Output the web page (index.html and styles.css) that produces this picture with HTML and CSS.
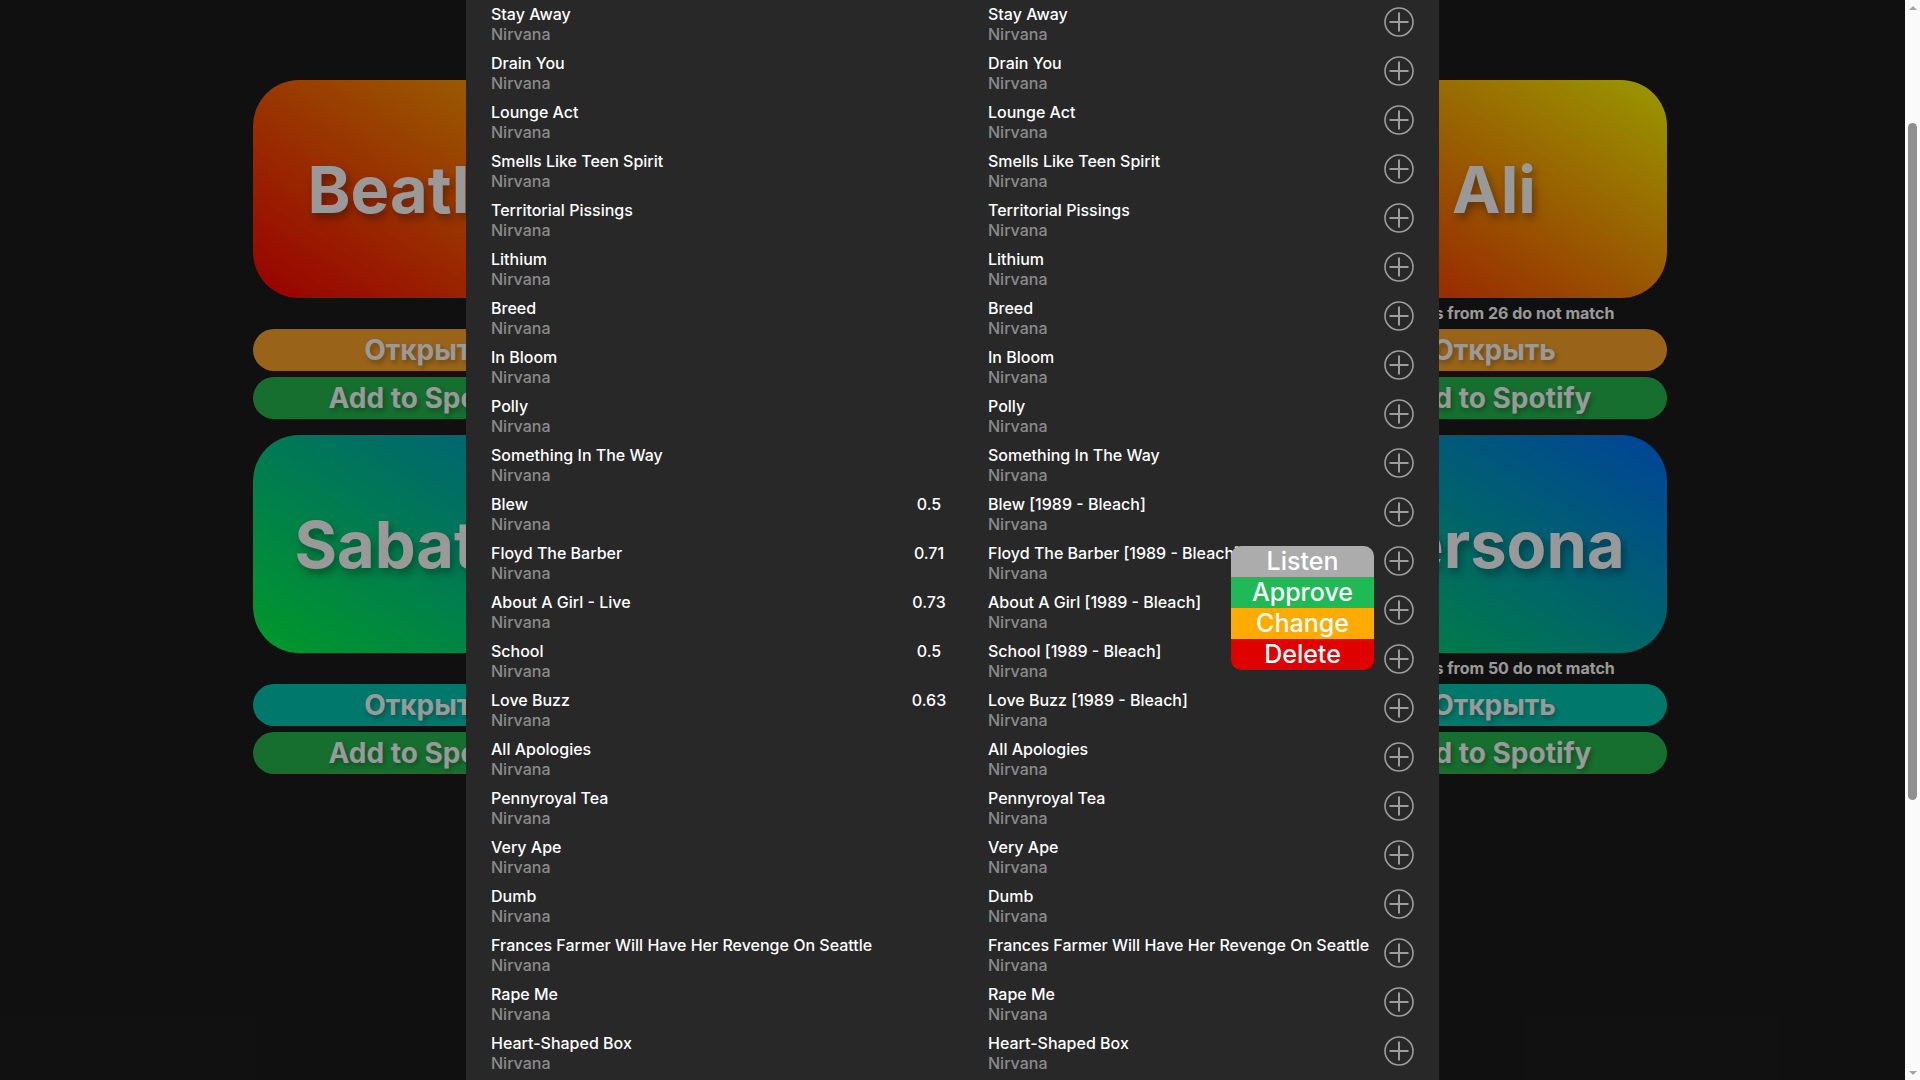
FILE: index.html
```html
<!DOCTYPE html>
<html lang="en">
<head>
<meta charset="utf-8">
<title>Playlists</title>
<link rel="stylesheet" href="styles.css">
</head>
<body>
<div class="viewport">
  <main class="main">
    <section class="board">
      <div class="item">
        <div class="card g-beatles"><span>Beatles</span></div>
        <div class="info"></div>
        <div class="btn btn-orange">Открыть</div>
        <div class="btn btn-green">Add to Spotify</div>
      </div>
      <div class="item">
        <div class="card g-nirvana"><span>Nirvana</span></div>
        <div class="info">5 tracks from 22 do not match</div>
        <div class="btn btn-orange">Открыть</div>
        <div class="btn btn-green">Add to Spotify</div>
      </div>
      <div class="item">
        <div class="card g-queen"><span>Queen</span></div>
        <div class="info"></div>
        <div class="btn btn-orange">Открыть</div>
        <div class="btn btn-green">Add to Spotify</div>
      </div>
      <div class="item">
        <div class="card g-ali"><span>Ali</span></div>
        <div class="info">12 tracks from 26 do not match</div>
        <div class="btn btn-orange">Открыть</div>
        <div class="btn btn-green">Add to Spotify</div>
      </div>
      <div class="item">
        <div class="card g-sabaton"><span>Sabaton</span></div>
        <div class="info"></div>
        <div class="btn btn-teal">Открыть</div>
        <div class="btn btn-green">Add to Spotify</div>
      </div>
      <div class="item">
        <div class="card g-rock"><span>Rock</span></div>
        <div class="info"></div>
        <div class="btn btn-teal">Открыть</div>
        <div class="btn btn-green">Add to Spotify</div>
      </div>
      <div class="item">
        <div class="card g-metal"><span>Metal</span></div>
        <div class="info"></div>
        <div class="btn btn-teal">Открыть</div>
        <div class="btn btn-green">Add to Spotify</div>
      </div>
      <div class="item">
        <div class="card g-persona"><span>Persona</span></div>
        <div class="info">19 tracks from 50 do not match</div>
        <div class="btn btn-teal">Открыть</div>
        <div class="btn btn-green">Add to Spotify</div>
      </div>
    </section>

    <div class="backdrop">
      <div class="panel">
        <div class="row"><div class="track"><div class="t">Stay Away</div><div class="a">Nirvana</div></div><div class="score"></div><div class="track match"><div class="t">Stay Away</div><div class="a">Nirvana</div></div><div class="add"><svg viewBox="0 0 30 30"><circle cx="15" cy="15" r="14"/><path d="M15 5.5V24.5M5.5 15H24.5"/></svg></div></div>
        <div class="row"><div class="track"><div class="t">Drain You</div><div class="a">Nirvana</div></div><div class="score"></div><div class="track match"><div class="t">Drain You</div><div class="a">Nirvana</div></div><div class="add"><svg viewBox="0 0 30 30"><circle cx="15" cy="15" r="14"/><path d="M15 5.5V24.5M5.5 15H24.5"/></svg></div></div>
        <div class="row"><div class="track"><div class="t">Lounge Act</div><div class="a">Nirvana</div></div><div class="score"></div><div class="track match"><div class="t">Lounge Act</div><div class="a">Nirvana</div></div><div class="add"><svg viewBox="0 0 30 30"><circle cx="15" cy="15" r="14"/><path d="M15 5.5V24.5M5.5 15H24.5"/></svg></div></div>
        <div class="row"><div class="track"><div class="t">Smells Like Teen Spirit</div><div class="a">Nirvana</div></div><div class="score"></div><div class="track match"><div class="t">Smells Like Teen Spirit</div><div class="a">Nirvana</div></div><div class="add"><svg viewBox="0 0 30 30"><circle cx="15" cy="15" r="14"/><path d="M15 5.5V24.5M5.5 15H24.5"/></svg></div></div>
        <div class="row"><div class="track"><div class="t">Territorial Pissings</div><div class="a">Nirvana</div></div><div class="score"></div><div class="track match"><div class="t">Territorial Pissings</div><div class="a">Nirvana</div></div><div class="add"><svg viewBox="0 0 30 30"><circle cx="15" cy="15" r="14"/><path d="M15 5.5V24.5M5.5 15H24.5"/></svg></div></div>
        <div class="row"><div class="track"><div class="t">Lithium</div><div class="a">Nirvana</div></div><div class="score"></div><div class="track match"><div class="t">Lithium</div><div class="a">Nirvana</div></div><div class="add"><svg viewBox="0 0 30 30"><circle cx="15" cy="15" r="14"/><path d="M15 5.5V24.5M5.5 15H24.5"/></svg></div></div>
        <div class="row"><div class="track"><div class="t">Breed</div><div class="a">Nirvana</div></div><div class="score"></div><div class="track match"><div class="t">Breed</div><div class="a">Nirvana</div></div><div class="add"><svg viewBox="0 0 30 30"><circle cx="15" cy="15" r="14"/><path d="M15 5.5V24.5M5.5 15H24.5"/></svg></div></div>
        <div class="row"><div class="track"><div class="t">In Bloom</div><div class="a">Nirvana</div></div><div class="score"></div><div class="track match"><div class="t">In Bloom</div><div class="a">Nirvana</div></div><div class="add"><svg viewBox="0 0 30 30"><circle cx="15" cy="15" r="14"/><path d="M15 5.5V24.5M5.5 15H24.5"/></svg></div></div>
        <div class="row"><div class="track"><div class="t">Polly</div><div class="a">Nirvana</div></div><div class="score"></div><div class="track match"><div class="t">Polly</div><div class="a">Nirvana</div></div><div class="add"><svg viewBox="0 0 30 30"><circle cx="15" cy="15" r="14"/><path d="M15 5.5V24.5M5.5 15H24.5"/></svg></div></div>
        <div class="row"><div class="track"><div class="t">Something In The Way</div><div class="a">Nirvana</div></div><div class="score"></div><div class="track match"><div class="t">Something In The Way</div><div class="a">Nirvana</div></div><div class="add"><svg viewBox="0 0 30 30"><circle cx="15" cy="15" r="14"/><path d="M15 5.5V24.5M5.5 15H24.5"/></svg></div></div>
        <div class="row"><div class="track"><div class="t">Blew</div><div class="a">Nirvana</div></div><div class="score">0.5</div><div class="track match"><div class="t">Blew [1989 - Bleach]</div><div class="a">Nirvana</div></div><div class="add"><svg viewBox="0 0 30 30"><circle cx="15" cy="15" r="14"/><path d="M15 5.5V24.5M5.5 15H24.5"/></svg></div></div>
        <div class="row"><div class="track"><div class="t">Floyd The Barber</div><div class="a">Nirvana</div></div><div class="score">0.71</div><div class="track match"><div class="t">Floyd The Barber [1989 - Bleach]</div><div class="a">Nirvana</div></div><div class="add"><svg viewBox="0 0 30 30"><circle cx="15" cy="15" r="14"/><path d="M15 5.5V24.5M5.5 15H24.5"/></svg></div></div>
        <div class="row"><div class="track"><div class="t">About A Girl - Live</div><div class="a">Nirvana</div></div><div class="score">0.73</div><div class="track match"><div class="t">About A Girl [1989 - Bleach]</div><div class="a">Nirvana</div></div><div class="add"><svg viewBox="0 0 30 30"><circle cx="15" cy="15" r="14"/><path d="M15 5.5V24.5M5.5 15H24.5"/></svg></div></div>
        <div class="row"><div class="track"><div class="t">School</div><div class="a">Nirvana</div></div><div class="score">0.5</div><div class="track match"><div class="t">School [1989 - Bleach]</div><div class="a">Nirvana</div></div><div class="add"><svg viewBox="0 0 30 30"><circle cx="15" cy="15" r="14"/><path d="M15 5.5V24.5M5.5 15H24.5"/></svg></div></div>
        <div class="row"><div class="track"><div class="t">Love Buzz</div><div class="a">Nirvana</div></div><div class="score">0.63</div><div class="track match"><div class="t">Love Buzz [1989 - Bleach]</div><div class="a">Nirvana</div></div><div class="add"><svg viewBox="0 0 30 30"><circle cx="15" cy="15" r="14"/><path d="M15 5.5V24.5M5.5 15H24.5"/></svg></div></div>
        <div class="row"><div class="track"><div class="t">All Apologies</div><div class="a">Nirvana</div></div><div class="score"></div><div class="track match"><div class="t">All Apologies</div><div class="a">Nirvana</div></div><div class="add"><svg viewBox="0 0 30 30"><circle cx="15" cy="15" r="14"/><path d="M15 5.5V24.5M5.5 15H24.5"/></svg></div></div>
        <div class="row"><div class="track"><div class="t">Pennyroyal Tea</div><div class="a">Nirvana</div></div><div class="score"></div><div class="track match"><div class="t">Pennyroyal Tea</div><div class="a">Nirvana</div></div><div class="add"><svg viewBox="0 0 30 30"><circle cx="15" cy="15" r="14"/><path d="M15 5.5V24.5M5.5 15H24.5"/></svg></div></div>
        <div class="row"><div class="track"><div class="t">Very Ape</div><div class="a">Nirvana</div></div><div class="score"></div><div class="track match"><div class="t">Very Ape</div><div class="a">Nirvana</div></div><div class="add"><svg viewBox="0 0 30 30"><circle cx="15" cy="15" r="14"/><path d="M15 5.5V24.5M5.5 15H24.5"/></svg></div></div>
        <div class="row"><div class="track"><div class="t">Dumb</div><div class="a">Nirvana</div></div><div class="score"></div><div class="track match"><div class="t">Dumb</div><div class="a">Nirvana</div></div><div class="add"><svg viewBox="0 0 30 30"><circle cx="15" cy="15" r="14"/><path d="M15 5.5V24.5M5.5 15H24.5"/></svg></div></div>
        <div class="row"><div class="track"><div class="t">Frances Farmer Will Have Her Revenge On Seattle</div><div class="a">Nirvana</div></div><div class="score"></div><div class="track match"><div class="t">Frances Farmer Will Have Her Revenge On Seattle</div><div class="a">Nirvana</div></div><div class="add"><svg viewBox="0 0 30 30"><circle cx="15" cy="15" r="14"/><path d="M15 5.5V24.5M5.5 15H24.5"/></svg></div></div>
        <div class="row"><div class="track"><div class="t">Rape Me</div><div class="a">Nirvana</div></div><div class="score"></div><div class="track match"><div class="t">Rape Me</div><div class="a">Nirvana</div></div><div class="add"><svg viewBox="0 0 30 30"><circle cx="15" cy="15" r="14"/><path d="M15 5.5V24.5M5.5 15H24.5"/></svg></div></div>
        <div class="row"><div class="track"><div class="t">Heart-Shaped Box</div><div class="a">Nirvana</div></div><div class="score"></div><div class="track match"><div class="t">Heart-Shaped Box</div><div class="a">Nirvana</div></div><div class="add"><svg viewBox="0 0 30 30"><circle cx="15" cy="15" r="14"/><path d="M15 5.5V24.5M5.5 15H24.5"/></svg></div></div>

        <div class="menu">
          <div class="menu-item m-listen">Listen</div>
          <div class="menu-item m-approve">Approve</div>
          <div class="menu-item m-change">Change</div>
          <div class="menu-item m-delete">Delete</div>
        </div>
      </div>
    </div>
  </main>

  <aside class="scrollbar">
    <div class="sb-btn"><span class="arrow-up"></span></div>
    <div class="sb-track"><div class="sb-thumb"></div></div>
    <div class="sb-btn"><span class="arrow-down"></span></div>
  </aside>
</div>
</body>
</html>
```

FILE: styles.css
```css
* { box-sizing: border-box; }

html, body {
  margin: 0;
  padding: 0;
  width: 1920px;
  height: 1080px;
  overflow: hidden;
  background: #1c1c1c;
  font-family: Inter, "Noto Sans", "Liberation Sans", sans-serif;
}

.viewport {
  display: flex;
  width: 1920px;
  height: 1080px;
}

.main {
  position: relative;
  flex: 1;
  height: 1080px;
  overflow: hidden;
}

/* ---------- background board ---------- */
.board {
  display: grid;
  grid-template-columns: repeat(4, 346px);
  column-gap: 10px;
  row-gap: 16px;
  padding: 80px 0 0 253px;
}

.item {
  display: flex;
  flex-direction: column;
}

.card {
  height: 218px;
  border-radius: 46px;
  display: flex;
  align-items: center;
  justify-content: center;
  color: #fff;
  font-size: 65px;
  font-weight: 700;
  text-shadow: 3px 5px 8px rgba(0, 0, 0, 0.35);
}

.g-beatles { background: linear-gradient(to top right, #ff0000, #ffbb00); }
.g-nirvana { background: linear-gradient(to top right, #ff2200, #ffcc00); }
.g-queen   { background: linear-gradient(to top right, #ff1a00, #ffdd00); }
.g-ali     { background: linear-gradient(to top right, #ff2200, #ffff00); }
.g-sabaton { background: linear-gradient(to top right, #00ff44, #0096d6); }
.g-rock    { background: linear-gradient(to top right, #00f050, #0088e0); }
.g-metal   { background: linear-gradient(to top right, #00e858, #0078f0); }
.g-persona { background: linear-gradient(to top right, #00e060, #0070ff); }

.info {
  height: 31px;
  line-height: 31px;
  text-align: center;
  color: #fff;
  font-size: 16px;
  font-weight: 700;
  white-space: nowrap;
}

.btn {
  height: 42px;
  line-height: 42px;
  border-radius: 21px;
  text-align: center;
  color: #fff;
  font-size: 28px;
  font-weight: 700;
  text-shadow: 2px 3px 5px rgba(0, 0, 0, 0.3);
  white-space: nowrap;
}

.btn + .btn { margin-top: 6px; }

.btn-orange { background: #ffa72a; }
.btn-teal   { background: #00c8b4; }
.btn-green  { background: #25b94f; }

/* ---------- modal ---------- */
.backdrop {
  position: absolute;
  inset: 0;
  background: rgba(0, 0, 0, 0.4);
  display: flex;
  justify-content: center;
}

.panel {
  position: relative;
  width: 973px;
  height: 1080px;
  background: #282828;
  padding: 0 25px 0 25px;
  overflow: hidden;
}

.row {
  display: flex;
  height: 49px;
  align-items: flex-start;
}

.track {
  width: 408px;
  padding-top: 3.5px;
  font-size: 16px;
  line-height: 20px;
  white-space: nowrap;
}

.track.match {
  width: 425px;
  padding-left: 29px;
}

.t {
  color: #fff;
  font-weight: 500;
}

.a {
  color: #8b8b8b;
  font-weight: 500;
}

.score {
  width: 60px;
  padding-top: 3.5px;
  text-align: center;
  color: #fff;
  font-size: 16px;
  line-height: 20px;
  font-weight: 500;
}

.add {
  width: 30px;
  height: 30px;
  margin-top: 7px;
}

.add svg {
  display: block;
  width: 30px;
  height: 30px;
  fill: none;
  stroke: #9d9d9d;
}

.add svg circle { stroke-width: 1.6; }
.add svg path { stroke-width: 2; }

.menu {
  position: absolute;
  left: 765px;
  top: 546px;
  width: 143px;
  border-radius: 10px;
  overflow: hidden;
}

.menu-item {
  height: 31px;
  line-height: 31px;
  text-align: center;
  color: #fff;
  font-size: 25px;
  font-weight: 500;
}

.m-listen  { background: #acacac; }
.m-approve { background: #1fba55; }
.m-change  { background: #ffab00; }
.m-delete  { background: #e00000; }

/* ---------- scrollbar ---------- */
.scrollbar {
  width: 15px;
  height: 1080px;
  background: #fafafa;
  display: flex;
  flex-direction: column;
}

.sb-btn {
  height: 15px;
  display: flex;
  align-items: center;
  justify-content: center;
}

.arrow-up {
  width: 0;
  height: 0;
  border-left: 4px solid transparent;
  border-right: 4px solid transparent;
  border-bottom: 4px solid #a3a3a3;
}

.arrow-down {
  width: 0;
  height: 0;
  border-left: 4px solid transparent;
  border-right: 4px solid transparent;
  border-top: 4px solid #a3a3a3;
}

.sb-track {
  flex: 1;
  padding: 108px 3px 0;
}

.sb-thumb {
  height: 677px;
  border-radius: 5px;
  background: #8f8f8f;
}
```
